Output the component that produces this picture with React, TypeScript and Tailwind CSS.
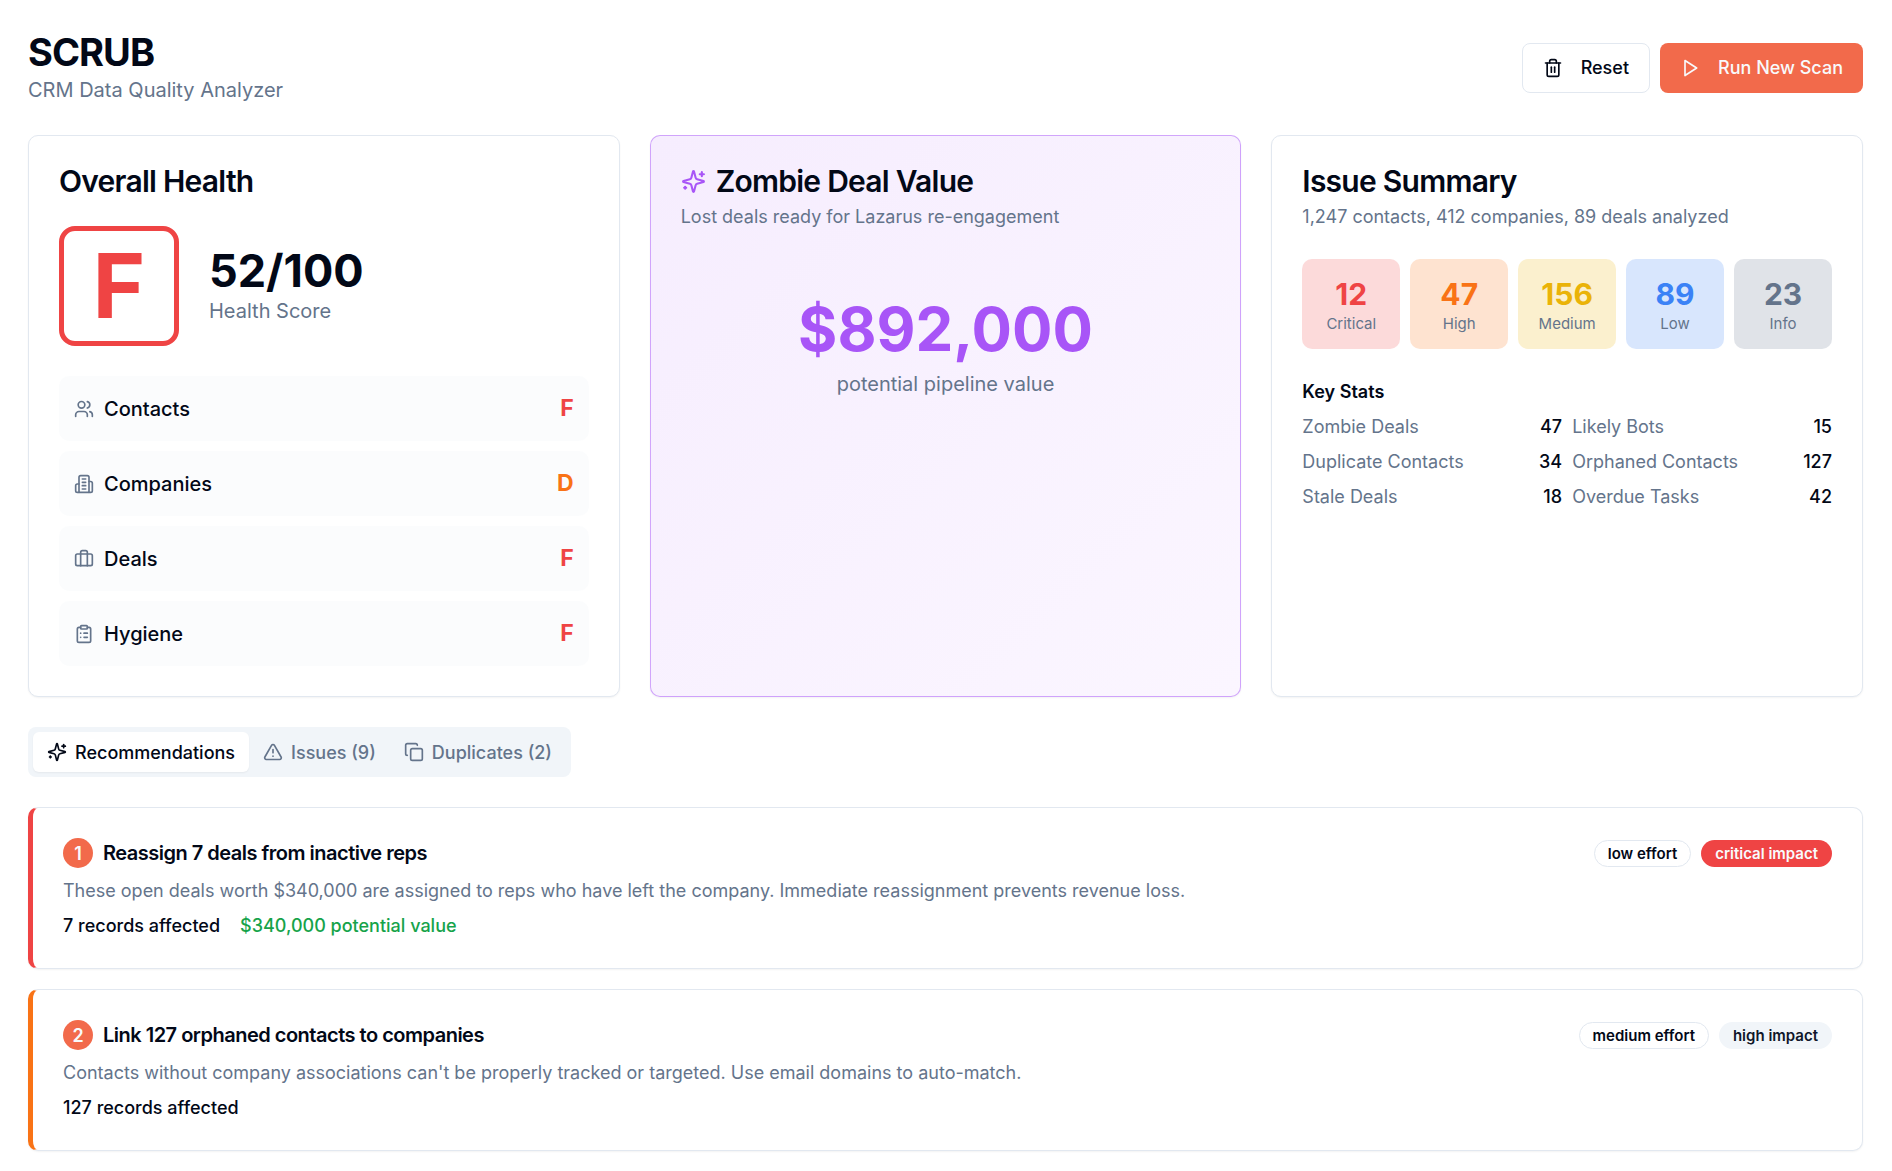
import {
  Briefcase,
  ClipboardList,
  Copy,
  Trash2,
  TriangleAlert,
  Users,
} from "lucide-react";
import { useState, type ComponentType, type ReactNode } from "react";

type IconProps = { className?: string };

function IconBase({ className, children }: IconProps & { children: ReactNode }) {
  return (
    <svg
      viewBox="0 0 24 24"
      fill="none"
      stroke="currentColor"
      strokeWidth={2}
      strokeLinecap="round"
      strokeLinejoin="round"
      className={className}
      aria-hidden="true"
    >
      {children}
    </svg>
  );
}

function BuildingIcon({ className }: IconProps) {
  return (
    <IconBase className={className}>
      <path d="M6 22V4a2 2 0 0 1 2-2h8a2 2 0 0 1 2 2v18Z" />
      <path d="M6 12H4a2 2 0 0 0-2 2v6a2 2 0 0 0 2 2h2" />
      <path d="M18 9h2a2 2 0 0 1 2 2v9a2 2 0 0 1-2 2h-2" />
      <path d="M10 6h4" />
      <path d="M10 10h4" />
      <path d="M10 14h4" />
      <path d="M10 18h4" />
    </IconBase>
  );
}

function SparklesIcon({ className }: IconProps) {
  return (
    <IconBase className={className}>
      <path d="M9.937 15.5A2 2 0 0 0 8.5 14.063l-6.135-1.582a.5.5 0 0 1 0-.962L8.5 9.936A2 2 0 0 0 9.937 8.5l1.582-6.135a.5.5 0 0 1 .963 0L14.063 8.5A2 2 0 0 0 15.5 9.937l6.135 1.581a.5.5 0 0 1 0 .964L15.5 14.063a2 2 0 0 0-1.437 1.437l-1.582 6.135a.5.5 0 0 1-.963 0z" />
      <path d="M20 3v4" />
      <path d="M22 5h-4" />
      <path d="M4 17v2" />
      <path d="M5 18H3" />
    </IconBase>
  );
}

function PlayIcon({ className }: IconProps) {
  return (
    <IconBase className={className}>
      <path d="M6 3l14 9-14 9z" />
    </IconBase>
  );
}

type Category = {
  name: string;
  grade: string;
  color: string;
  icon: ComponentType<IconProps>;
};

const categories: Category[] = [
  { name: "Contacts", grade: "F", color: "text-[#ef4444]", icon: Users },
  { name: "Companies", grade: "D", color: "text-[#f97316]", icon: BuildingIcon },
  { name: "Deals", grade: "F", color: "text-[#ef4444]", icon: Briefcase },
  { name: "Hygiene", grade: "F", color: "text-[#ef4444]", icon: ClipboardList },
];

const severities = [
  { label: "Critical", count: 12, bg: "bg-[#ef4444]/20", color: "text-[#ef4444]" },
  { label: "High", count: 47, bg: "bg-[#f97316]/20", color: "text-[#f97316]" },
  { label: "Medium", count: 156, bg: "bg-[#eab308]/20", color: "text-[#eab308]" },
  { label: "Low", count: 89, bg: "bg-[#3b82f6]/20", color: "text-[#3b82f6]" },
  { label: "Info", count: 23, bg: "bg-[#64748b]/20", color: "text-[#64748b]" },
];

const keyStats = [
  { label: "Zombie Deals", value: 47 },
  { label: "Likely Bots", value: 15 },
  { label: "Duplicate Contacts", value: 34 },
  { label: "Orphaned Contacts", value: 127 },
  { label: "Stale Deals", value: 18 },
  { label: "Overdue Tasks", value: 42 },
];

const tabs = [
  { id: "recommendations", label: "Recommendations", icon: SparklesIcon },
  { id: "issues", label: "Issues (9)", icon: TriangleAlert },
  { id: "duplicates", label: "Duplicates (2)", icon: Copy },
];

const recommendations = [
  {
    title: "Reassign 7 deals from inactive reps",
    description:
      "These open deals worth $340,000 are assigned to reps who have left the company. Immediate reassignment prevents revenue loss.",
    records: 7,
    value: "$340,000",
    effort: "low",
    impact: "critical",
    edge: "border-l-[#ef4444]",
    badge: "bg-[#ef4444] text-[#f8fafc]",
  },
  {
    title: "Link 127 orphaned contacts to companies",
    description:
      "Contacts without company associations can't be properly tracked or targeted. Use email domains to auto-match.",
    records: 127,
    value: null,
    effort: "medium",
    impact: "high",
    edge: "border-l-[#f97316]",
    badge: "bg-[#f1f5f9] text-[#0f172a]",
  },
];

export default function App() {
  const [activeTab, setActiveTab] = useState("recommendations");

  return (
    <main className="min-h-screen bg-white pt-[30px] pr-[29px] pb-5 pl-7 font-['Inter',sans-serif] text-[20px] leading-[30px] text-[#020817]">
      <header className="flex items-center justify-between">
        <div>
          <h1 className="text-[38px] leading-[45px] font-bold tracking-tight">SCRUB</h1>
          <p className="text-[#64748b]">CRM Data Quality Analyzer</p>
        </div>
        <div className="flex gap-[10px] text-[18px] leading-[25px] font-medium">
          <button type="button" className="flex h-[50px] items-center gap-[18px] rounded-lg border border-[#e2e8f0] bg-white px-5">
            <Trash2 className="size-5" />
            Reset
          </button>
          <button type="button" className="flex h-[50px] items-center gap-[18px] rounded-lg bg-[#f26a4b] px-5 text-[#f8fafc]">
            <PlayIcon className="size-5" />
            Run New Scan
          </button>
        </div>
      </header>

      <div className="mt-[30px] grid grid-cols-3 gap-[30px]">
        <section className="rounded-[10px] border border-[#e2e8f0] bg-white p-[30px] shadow-xs">
          <h2 className="text-[30px] leading-[30px] font-semibold tracking-tight">Overall Health</h2>
          <div className="mt-[30px] flex items-center gap-[30px]">
            <div className="flex size-[120px] items-center justify-center rounded-2xl border-[5px] border-[#ef4444] text-[90px] leading-[90px] font-bold text-[#ef4444]">
              F
            </div>
            <div>
              <div className="text-[45px] leading-[50px] font-bold">52/100</div>
              <div className="text-[#64748b]">Health Score</div>
            </div>
          </div>
          <ul className="mt-[30px] flex flex-col gap-[10px]">
            {categories.map(({ name, grade, color, icon: Icon }) => (
              <li key={name} className="flex items-center justify-between rounded-[10px] bg-[#f1f5f9]/30 p-[15px]">
                <div className="flex items-center gap-[10px]">
                  <Icon className="size-5 text-[#64748b]" />
                  <span className="font-medium">{name}</span>
                </div>
                <span className={`text-[23px] leading-[35px] font-bold ${color}`}>{grade}</span>
              </li>
            ))}
          </ul>
        </section>

        <section className="rounded-[10px] border border-[#a855f7]/50 bg-linear-to-br from-[#f6edfe] to-[#fbf6ff] p-[30px] shadow-xs">
          <h2 className="flex items-center gap-[10px] text-[30px] leading-[30px] font-semibold tracking-tight">
            <SparklesIcon className="size-[25px] text-[#a855f7]" />
            Zombie Deal Value
          </h2>
          <p className="mt-2 text-[18px] leading-[25px] text-[#64748b]">Lost deals ready for Lazarus re-engagement</p>
          <div className="mt-[30px] py-10 text-center">
            <div className="text-[60px] leading-[60px] font-bold text-[#a855f7]">$892,000</div>
            <p className="mt-[10px] text-[#64748b]">potential pipeline value</p>
          </div>
        </section>

        <section className="rounded-[10px] border border-[#e2e8f0] bg-white p-[30px] shadow-xs">
          <h2 className="text-[30px] leading-[30px] font-semibold tracking-tight">Issue Summary</h2>
          <p className="mt-2 text-[18px] leading-[25px] text-[#64748b]">1,247 contacts, 412 companies, 89 deals analyzed</p>
          <div className="mt-[30px] grid grid-cols-5 gap-[10px]">
            {severities.map((s) => (
              <div key={s.label} className={`rounded-[10px] p-[15px] text-center ${s.bg}`}>
                <div className={`text-[30px] leading-[40px] font-bold ${s.color}`}>{s.count}</div>
                <div className="text-[15px] leading-[20px] text-[#64748b]">{s.label}</div>
              </div>
            ))}
          </div>
          <h3 className="mt-[30px] text-[18px] leading-[25px] font-semibold">Key Stats</h3>
          <dl className="mt-[10px] grid grid-cols-2 gap-[10px] text-[18px] leading-[25px]">
            {keyStats.map((stat) => (
              <div key={stat.label} className="flex justify-between">
                <dt className="text-[#64748b]">{stat.label}</dt>
                <dd className="font-medium">{stat.value}</dd>
              </div>
            ))}
          </dl>
        </section>
      </div>

      <div role="tablist" className="mt-[30px] inline-flex rounded-lg bg-[#f1f5f9] p-[5px] align-top text-[18px] leading-[25px] font-medium">
        {tabs.map(({ id, label, icon: Icon }) => (
          <button
            key={id}
            type="button"
            role="tab"
            aria-selected={activeTab === id}
            onClick={() => setActiveTab(id)}
            className={`flex h-10 items-center gap-2 rounded-md px-[14px] ${
              activeTab === id ? "bg-white text-[#020817] shadow-xs" : "text-[#64748b]"
            }`}
          >
            <Icon className="size-5" />
            {label}
          </button>
        ))}
      </div>

      {activeTab === "recommendations" && (
        <div role="tabpanel" className="mt-[30px] flex flex-col gap-5">
          {recommendations.map((rec, i) => (
            <article
              key={rec.title}
              className={`rounded-[10px] border border-l-[5px] border-[#e2e8f0] bg-white p-[30px] shadow-xs ${rec.edge}`}
            >
              <div className="flex items-center justify-between">
                <div className="flex items-center gap-[10px]">
                  <span className="flex size-[30px] items-center justify-center rounded-full bg-[#f26a4b] text-[18px] leading-[25px] font-semibold text-[#f8fafc]">
                    {i + 1}
                  </span>
                  <h3 className="font-semibold tracking-tight">{rec.title}</h3>
                </div>
                <div className="flex gap-[10px] text-[15px] leading-[25px] font-semibold">
                  <span className="rounded-full border border-[#e2e8f0] px-[13px]">{rec.effort} effort</span>
                  <span className={`rounded-full border border-transparent px-[13px] ${rec.badge}`}>{rec.impact} impact</span>
                </div>
              </div>
              <p className="mt-[10px] text-[18px] leading-[25px] text-[#64748b]">{rec.description}</p>
              <div className="mt-[10px] flex gap-5 text-[18px] leading-[25px] font-medium">
                <span>{rec.records} records affected</span>
                {rec.value && <span className="text-[#16a34a]">{rec.value} potential value</span>}
              </div>
            </article>
          ))}
        </div>
      )}
    </main>
  );
}
